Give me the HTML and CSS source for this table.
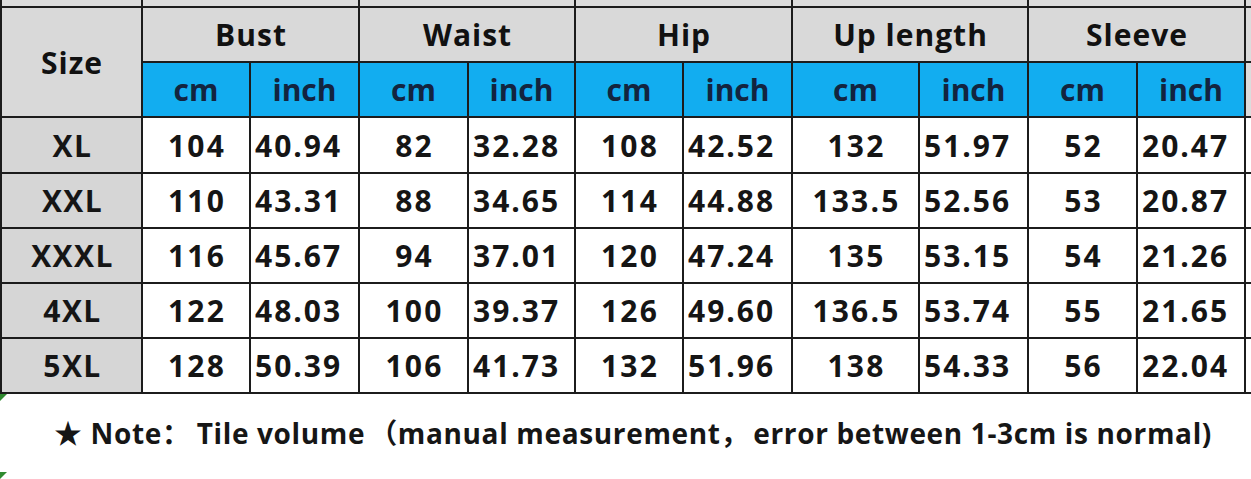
FILE: index.html
```html
<!DOCTYPE html>
<html lang="en">
<head>
<meta charset="utf-8">
<title>Size chart</title>
<link rel="stylesheet" href="styles.css">
</head>
<body>
<div class="page">
  <div class="chart">
    <div class="c top"></div>
    <div class="c top span2"></div>
    <div class="c top span2"></div>
    <div class="c top span2"></div>
    <div class="c top span2"></div>
    <div class="c top span2"></div>
    <div class="c top"></div>

    <div class="c gray head size">Size</div>
    <div class="c gray head span2">Bust</div>
    <div class="c gray head span2">Waist</div>
    <div class="c gray head span2">Hip</div>
    <div class="c gray head span2">Up length</div>
    <div class="c gray head span2">Sleeve</div>
    <div class="c top"></div>

    <div class="c blue">cm</div><div class="c blue">inch</div>
    <div class="c blue">cm</div><div class="c blue">inch</div>
    <div class="c blue">cm</div><div class="c blue">inch</div>
    <div class="c blue">cm</div><div class="c blue">inch</div>
    <div class="c blue">cm</div><div class="c blue">inch</div>
    <div class="c top"></div>

    <div class="c sz">XL</div>
    <div class="c cm">104</div><div class="c in">40.94</div>
    <div class="c cm">82</div><div class="c in">32.28</div>
    <div class="c cm">108</div><div class="c in">42.52</div>
    <div class="c cm">132</div><div class="c in">51.97</div>
    <div class="c cm">52</div><div class="c in">20.47</div>
    <div class="c edge"></div>

    <div class="c sz">XXL</div>
    <div class="c cm">110</div><div class="c in">43.31</div>
    <div class="c cm">88</div><div class="c in">34.65</div>
    <div class="c cm">114</div><div class="c in">44.88</div>
    <div class="c cm">133.5</div><div class="c in">52.56</div>
    <div class="c cm">53</div><div class="c in">20.87</div>
    <div class="c edge"></div>

    <div class="c sz">XXXL</div>
    <div class="c cm">116</div><div class="c in">45.67</div>
    <div class="c cm">94</div><div class="c in">37.01</div>
    <div class="c cm">120</div><div class="c in">47.24</div>
    <div class="c cm">135</div><div class="c in">53.15</div>
    <div class="c cm">54</div><div class="c in">21.26</div>
    <div class="c edge"></div>

    <div class="c sz">4XL</div>
    <div class="c cm">122</div><div class="c in">48.03</div>
    <div class="c cm">100</div><div class="c in">39.37</div>
    <div class="c cm">126</div><div class="c in">49.60</div>
    <div class="c cm">136.5</div><div class="c in">53.74</div>
    <div class="c cm">55</div><div class="c in">21.65</div>
    <div class="c edge"></div>

    <div class="c sz">5XL</div>
    <div class="c cm">128</div><div class="c in">50.39</div>
    <div class="c cm">106</div><div class="c in">41.73</div>
    <div class="c cm">132</div><div class="c in">51.96</div>
    <div class="c cm">138</div><div class="c in">54.33</div>
    <div class="c cm">56</div><div class="c in">22.04</div>
    <div class="c edge"></div>
  </div>
  <p class="note">★ Note：<span class="gap"></span>Tile volume<span class="gap-s"></span>（manual measurement，<span class="gap-s"></span>error between 1-3cm is normal)</p>
  <span class="mark mark-a"></span>
  <span class="mark mark-b"></span>
</div>
</body>
</html>
```

FILE: styles.css
```css
html, body {
  margin: 0;
  padding: 0;
  background: #ffffff;
}

.page {
  position: relative;
  width: 1251px;
  height: 479px;
  overflow: hidden;
  font-family: "Open Sans", "Noto Sans", "Noto Sans CJK SC", sans-serif;
  font-weight: 700;
}

.chart {
  display: grid;
  grid-template-columns: 139px 106px 107px 107px 105px 106px 107px 125px 107px 107px 106px 20px;
  grid-template-rows: 6px 53px 53px 54px 53px 53px 53px 53px;
  gap: 2px;
  padding: 0 0 2px 2px;
  background: #1c1c1c;
  width: max-content;
}

.c {
  display: flex;
  align-items: center;
  justify-content: center;
  font-size: 30px;
  color: #151515;
  background: #ffffff;
  white-space: nowrap;
}

.span2 {
  grid-column: span 2;
}

.top {
  background: #dcdcdc;
}

.gray {
  background: #d9d9d9;
  color: #111111;
}

.head {
  letter-spacing: 1px;
  padding-left: 1px;
}

.size {
  grid-row: span 2;
}

.blue {
  background: #12adf0;
  color: #13243f;
}

.sz {
  background: #d6d6d6;
  letter-spacing: 1.4px;
  padding-left: 2px;
}

.cm {
  letter-spacing: 2.2px;
  padding-left: 2px;
}

.in {
  justify-content: flex-start;
  padding-left: 4px;
  letter-spacing: 2px;
}

.edge {
  background: #ffffff;
}

.note {
  margin: 20px 0 0 54px;
  font-size: 28px;
  color: #161616;
  white-space: nowrap;
  line-height: 38px;
  letter-spacing: 0.65px;
}

.gap {
  display: inline-block;
  width: 6px;
}

.gap-s {
  display: inline-block;
  width: 4px;
}

.mark {
  position: absolute;
  left: 0;
  width: 0;
  height: 0;
  border-top: 7px solid #2f8a2f;
  border-right: 7px solid transparent;
}

.mark-a {
  top: 394px;
}

.mark-b {
  top: 472px;
}
```
